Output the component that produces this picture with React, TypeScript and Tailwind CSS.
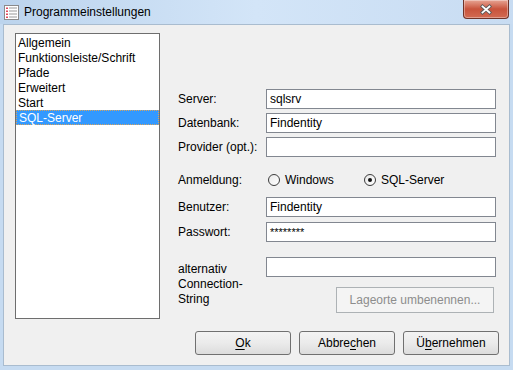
import type { ReactNode } from 'react';

const font = "font-['Liberation_Sans',Arial,sans-serif]";

function TitleIcon() {
  return (
    <svg width="15" height="15" viewBox="0 0 15 15" className="shrink-0">
      <rect x="0.5" y="0.5" width="14" height="14" fill="#ffffff" stroke="#8a8a8a" />
      {[3, 6, 9, 12].map((y) => (
        <g key={y}>
          <rect x="2" y={y - 0.5} width="2" height="1.5" fill="#e0485a" />
          <rect x="5" y={y - 0.5} width="8" height="1" fill="#9a9a9a" />
        </g>
      ))}
    </svg>
  );
}

function CloseButton() {
  return (
    <div className="mr-[4px] flex h-[19px] w-[46px] items-center justify-center self-start rounded-b-[4px] border border-t-0 border-[#6f3328] bg-gradient-to-b from-[#e6a494] via-[#c8533c] to-[#d26a52] shadow-[inset_0_0_0_1px_rgba(255,255,255,0.35)]">
      <svg width="14" height="11" viewBox="0 0 14 11">
        <path d="M3.5 2.5 L10.5 8.5 M10.5 2.5 L3.5 8.5" stroke="#5a5a5a" strokeWidth="3.6" strokeLinecap="square" />
        <path d="M3.5 2.5 L10.5 8.5 M10.5 2.5 L3.5 8.5" stroke="#ffffff" strokeWidth="1.8" strokeLinecap="square" />
      </svg>
    </div>
  );
}

function TextBox({ value, small }: { value?: string; small?: boolean }) {
  return (
    <div
      className={`flex h-[20px] w-[230px] items-center border border-[#828790] bg-white pl-[3px] ${
        small ? 'text-[11px]' : 'text-[12px]'
      }`}
    >
      {value}
    </div>
  );
}

function Row({ label, children, className = '' }: { label: string; children: ReactNode; className?: string }) {
  return (
    <div className={`flex items-center ${className}`}>
      <span className="w-[88px] shrink-0">{label}</span>
      {children}
    </div>
  );
}

function Radio({ checked }: { checked?: boolean }) {
  return (
    <span className="flex h-[12px] w-[12px] shrink-0 items-center justify-center rounded-full border border-[#3c3c3c] bg-gradient-to-br from-[#e8e8e8] to-white">
      {checked && <span className="h-[4px] w-[4px] rounded-full bg-[#111]" />}
    </span>
  );
}

function Button({ children }: { children: ReactNode }) {
  return (
    <div className="flex h-[24px] w-[96px] items-center justify-center rounded-[3px] border border-[#707070] bg-gradient-to-b from-[#f3f3f3] via-[#ebebeb] to-[#dcdcdc] text-[12px]">
      {children}
    </div>
  );
}

const items = ['Allgemein', 'Funktionsleiste/Schrift', 'Pfade', 'Erweitert', 'Start', 'SQL-Server'];

export default function App() {
  return (
    <div className={`${font} flex h-[370px] w-[513px] flex-col bg-[#c6dbf1] text-[12px] text-black`}>
      <div className="flex h-[24px] shrink-0 items-center bg-gradient-to-r from-[#bcd4ed] via-[#d3e5f8] to-[#c8dcf2] pl-[4px]">
        <TitleIcon />
        <span className="ml-[5px] text-[12px]">Programmeinstellungen</span>
        <div className="ml-auto self-start">
          <CloseButton />
        </div>
      </div>

      <div className="mx-[3px] mb-[4px] flex flex-1 flex-col border border-[#a9bccf] bg-[#f0f0f0] pl-[11px] pt-[8px]">
        <div className="flex">
          <div className="h-[286px] w-[145px] shrink-0 border border-[#6e6e6e] bg-white pt-[1px]">
            {items.map((it) => (
              <div
                key={it}
                className={`flex h-[15px] items-center pl-[2px] ${
                  it === 'SQL-Server' ? 'border border-dotted border-[#d9a35b] bg-[#3399ff] pl-[1px] text-white' : ''
                }`}
              >
                {it}
              </div>
            ))}
          </div>

          <div className="flex flex-1 flex-col pl-[18px] pt-[56px]">
            <Row label="Server:">
              <TextBox value="sqlsrv" />
            </Row>
            <Row label="Datenbank:" className="mt-[4px]">
              <TextBox value="Findentity" />
            </Row>
            <Row label="Provider (opt.):" className="mt-[4px]">
              <TextBox />
            </Row>
            <Row label="Anmeldung:" className="mt-[13px] h-[20px]">
              <div className="flex w-[98px] items-center pl-[2px]">
                <Radio />
                <span className="ml-[5px]">Windows</span>
              </div>
              <div className="flex items-center">
                <Radio checked />
                <span className="ml-[5px]">SQL-Server</span>
              </div>
            </Row>
            <Row label="Benutzer:" className="mt-[7px]">
              <TextBox value="Findentity" />
            </Row>
            <Row label="Passwort:" className="mt-[5px]">
              <TextBox value="********" small />
            </Row>
            <div className="mt-[15px] flex">
              <div className="mt-[5px] w-[88px] shrink-0 leading-[15px]">
                alternativ
                <br />
                Connection-
                <br />
                String
              </div>
              <div className="flex w-[230px] flex-col">
                <TextBox />
                <div className="mr-[2px] mt-[10px] flex h-[26px] w-[158px] items-center justify-center self-end border border-[#adb2b5] bg-[#f4f4f4] text-[#8d8d8d]">
                  Lageorte umbenennen...
                </div>
              </div>
            </div>
          </div>
        </div>

        <div className="mt-[12px] flex justify-end gap-[8px] pr-[10px]">
          <Button>
            <span className="underline underline-offset-2">O</span>k
          </Button>
          <Button>
            Abbre<span className="underline underline-offset-2">c</span>hen
          </Button>
          <Button>
            Ü<span className="underline underline-offset-2">b</span>ernehmen
          </Button>
        </div>
      </div>
    </div>
  );
}
